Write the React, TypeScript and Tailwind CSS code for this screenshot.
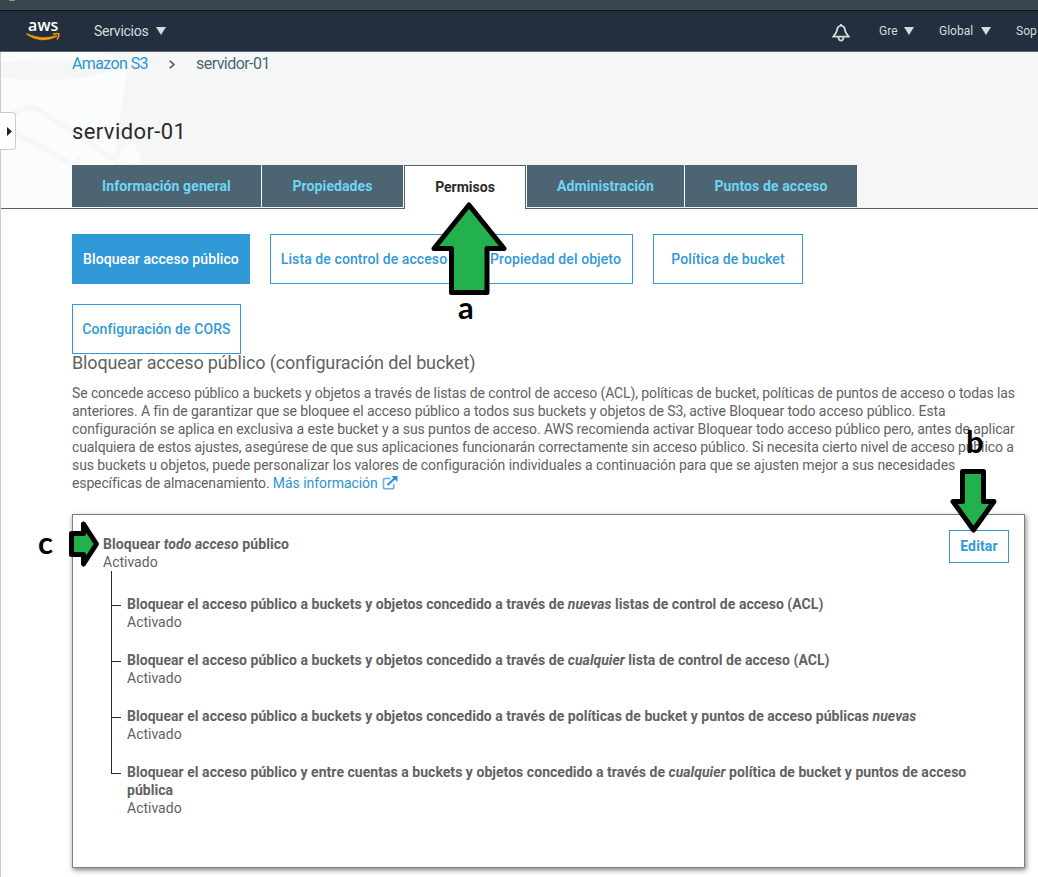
import type { ReactNode } from "react";

const Caret = ({ className }: { className: string }) => (
  <svg viewBox="0 0 10 8" className={`h-2 w-2.5 shrink-0 ${className}`}>
    <path d="M0 0H10L5 8Z" fill="#d5dbdb" />
  </svg>
);

const AwsLogo = () => (
  <div className="relative ml-[26px] h-[22px] w-[35px] shrink-0">
    <span className="absolute left-[2px] top-[-3px] font-['Open_Sans'] text-[16px] leading-[16px] font-semibold tracking-[0.1px] text-white">
      aws
    </span>
    <svg viewBox="0 0 35 22" className="absolute inset-0 h-[22px] w-[35px]">
      <path d="M.8 13.500Q15 20.500 30.500 15.500L31 16.500Q15 24.500 .5 14.300Z" fill="#f90" stroke="#f90" strokeWidth=".5" />
      <path d="M27 14.300Q33 12.600 33 14.500Q33 17 31 19.500" fill="none" stroke="#f90" strokeWidth="1.5" />
    </svg>
  </div>
);

const Bell = () => (
  <svg viewBox="0 0 18 18" className="h-[18px] w-[18px] shrink-0" fill="none" stroke="#d5dbdb" strokeWidth="1.8">
    <path d="M9 1.600C5.200 1.800 5.200 5 4.800 7C4.300 9.300 2.500 10.600 1.300 12.600H16.700C15.500 10.600 13.700 9.300 13.200 7C12.800 5 12.800 1.800 9 1.600Z" />
    <path d="M9 0V2M6.600 13V14Q6.800 16.600 9 16.600Q11.200 16.600 11.400 14V13" />
  </svg>
);

const ExternalIcon = () => (
  <svg viewBox="0 0 16 14" className="ml-1 inline-block h-3.5 w-4 align-[-2px]" fill="none">
    <path d="M8.500 2.500H2.800Q1.500 2.500 1.500 3.800V11Q1.500 12.800 3 12.800H10Q11.800 12.800 11.800 11V8" stroke="#64b2e3" strokeWidth="1.6" />
    <path d="M5.500 9L12.500 2.500" stroke="#2b94d3" strokeWidth="2.2" />
    <path d="M9.300 0H15.500V6Z" fill="#2b94d3" />
  </svg>
);

const ActionButton = ({ children, className }: { children: ReactNode; className: string }) => (
  <button className={`h-[50px] shrink-0 whitespace-nowrap border border-[#3299d8] text-[14px] font-medium tracking-[0.09px] ${className}`}>
    {children}
  </button>
);

const Tab = ({ children, className }: { children: ReactNode; className: string }) => (
  <div className={`flex h-[42px] items-center justify-center bg-[#4d6472] text-[14px] font-bold tracking-[0.1px] text-[#6fd5f3] ${className}`}>
    {children}
  </div>
);

const TreeItem = ({ children, last = false }: { children: ReactNode; last?: boolean }) => (
  <li className="flex">
    <div className="relative w-4 shrink-0">
      <div className={`absolute left-0 top-0 w-px bg-[#2b2b2b] ${last ? "h-[10px]" : "h-full"}`} />
      <div className="absolute left-0 top-[10px] h-px w-[10px] bg-[#2b2b2b]" />
    </div>
    <div className={last ? "" : "pb-5"}>
      <p className="font-bold tracking-[0.035px]">{children}</p>
      <p>Activado</p>
    </div>
  </li>
);

export default function App() {
  return (
    <div className="relative h-[877px] w-[1038px] overflow-hidden bg-white font-['Roboto',sans-serif] text-[14px] leading-[18px] text-[#626262]">
      <div className="h-[11px] overflow-hidden border-b border-[#10151b] bg-[#3a4650]">
        <div className="ml-[9px] h-px w-[6px] rounded-b bg-[#b78a73]" />
      </div>
      <nav className="flex h-[41px] items-center border-b border-[#596270] bg-[#232f3e] text-[12px] text-[#d5dbdb]">
        <AwsLogo />
        <span className="ml-[33px] w-[56px] whitespace-nowrap text-[14px] tracking-[-0.25px]">Servicios</span>
        <Caret className="ml-1.5" />
        <div className="ml-[666px] mt-1 flex"><Bell /></div>
        <span className="ml-[29px] w-[19px] whitespace-nowrap">Gre</span>
        <Caret className="ml-1.5" />
        <span className="ml-[25px] w-[36px] whitespace-nowrap">Global</span>
        <Caret className="ml-1.5" />
        <span className="ml-[25px] whitespace-nowrap">Sop</span>
      </nav>

      <main className="h-[825px] border-l border-[#ccc]">
        <header className="relative h-[157px] border-b border-[#4d6472] bg-[#f5f7f7] pl-[71px]">
          <svg viewBox="0 0 145 156" className="absolute left-0 top-0 h-[156px] w-[145px]">
            <path d="M0 0H100Q126 6 126 18L113 112L105 156H0Z" fill="#fbfcfc" />
            <path d="M0 11Q50 4 95 11Q115 18 95 23Q55 32 0 26Z" fill="#f5f7f7" />
            <path d="M8 66Q24 50 38 58L111 106L124 92" fill="none" stroke="#f6f8f8" strokeWidth="6" />
            <path d="M10 78L72 113L80 106" fill="none" stroke="#f6f8f8" strokeWidth="6" />
            <path d="M115 110L126 90Q137 90 140 112Z" fill="#fbfcfc" />
          </svg>
          <div className="relative flex h-[24px] items-center text-[16px]">
            <span className="w-[97px] whitespace-nowrap tracking-[-0.6px] text-[#2b94d3]">Amazon S3</span>
            <svg viewBox="0 0 6 9" className="h-[9px] w-[6px]" fill="none" stroke="#444" strokeWidth="1.5">
              <path d="M.7 .7L5 4.5L.7 8.3" />
            </svg>
            <span className="ml-[21px] tracking-[-0.55px] text-[#4d6472]">servidor-01</span>
          </div>
          <h1 className="relative mt-[44px] h-[24px] text-[22px] leading-[24px] tracking-[0.4px] text-[#2b2b2b]">servidor-01</h1>
          <div className="relative mt-[21px] flex gap-px">
            <Tab className="w-[189px]">Información general</Tab>
            <Tab className="w-[141px]">Propiedades</Tab>
            <div className="flex h-[44px] w-[122px] items-center justify-center border border-b-0 border-[#4d6472] bg-white pb-0.5 font-bold text-[#2b2b2b]">Permisos</div>
            <Tab className="w-[157px]">Administración</Tab>
            <Tab className="w-[172px]">Puntos de acceso</Tab>
          </div>
        </header>

        <section className="pl-[71px] pt-[25px]">
          <div className="flex gap-5">
            <ActionButton className="w-[178px] bg-[#3299d8] text-white">Bloquear acceso público</ActionButton>
            <ActionButton className="w-[188px] text-[#3299d8]">Lista de control de acceso</ActionButton>
            <ActionButton className="w-[155px] text-[#3299d8]">Propiedad del objeto</ActionButton>
            <ActionButton className="w-[150px] text-[#3299d8]">Política de bucket</ActionButton>
          </div>
          <ActionButton className="mt-5 block w-[169px] text-[#3299d8]">Configuración de CORS</ActionButton>

          <h2 className="h-[18px] text-[18px] leading-[18px] tracking-[-0.14px]">Bloquear acceso público (configuración del bucket)</h2>
          <p className="mt-[12px] whitespace-nowrap">
            <span className="tracking-[-0.11px]">Se concede acceso público a buckets y objetos a través de listas de control de acceso (ACL), políticas de bucket, políticas de puntos de acceso o todas las</span><br />
            <span className="tracking-[-0.084px]">anteriores. A fin de garantizar que se bloquee el acceso público a todos sus buckets y objetos de S3, active Bloquear todo acceso público. Esta</span><br />
            <span className="tracking-[-0.08px]">configuración se aplica en exclusiva a este bucket y a sus puntos de acceso. AWS recomienda activar Bloquear todo acceso público pero, antes de aplicar</span><br />
            <span className="tracking-[-0.11px]">cualquiera de estos ajustes, asegúrese de que sus aplicaciones funcionarán correctamente sin acceso público. Si necesita cierto nivel de acceso público a</span><br />
            <span className="tracking-[-0.076px]">sus buckets u objetos, puede personalizar los valores de configuración individuales a continuación para que se ajusten mejor a sus necesidades</span><br />
            <span className="tracking-[-0.13px]">específicas de almacenamiento. </span><a className="tracking-[-0.05px] text-[#2b94d3]">Más información<ExternalIcon /></a>
          </p>

          <div className="mt-[22px] flex h-[354px] w-[953px] items-start border border-[#808080] pl-[30px] pr-[15px] pt-[15px] shadow-[1px_2px_5px_rgba(0,0,0,0.5)]">
            <div className="mt-[5px] min-w-0 flex-1">
              <p className="font-bold tracking-[0.08px]">Bloquear <i>todo acceso</i> público</p>
              <p>Activado</p>
              <ul className="ml-2 whitespace-nowrap">
                <li className="h-6 border-l border-[#2b2b2b]" />
                <TreeItem>Bloquear el acceso público a buckets y objetos concedido a través de <i>nuevas</i> listas de control de acceso (ACL)</TreeItem>
                <TreeItem>Bloquear el acceso público a buckets y objetos concedido a través de <i>cualquier</i> lista de control de acceso (ACL)</TreeItem>
                <TreeItem>Bloquear el acceso público a buckets y objetos concedido a través de políticas de bucket y puntos de acceso públicas <i>nuevas</i></TreeItem>
                <TreeItem last>Bloquear el acceso público y entre cuentas a buckets y objetos concedido a través de <i>cualquier</i> política de bucket y puntos de acceso<br />pública</TreeItem>
              </ul>
            </div>
            <button className="h-[33px] w-[60px] shrink-0 border border-[#3299d8] pb-0.5 text-[14px] font-bold tracking-[0.15px] text-[#3299d8]">Editar</button>
          </div>
        </section>
      </main>

      <button className="absolute left-0 top-[112px] flex h-[38px] w-4 items-center justify-end rounded-r border border-l-0 border-[#ccc] bg-white pr-[3px]">
        <svg viewBox="0 0 5 9" className="h-[9px] w-[5px]"><path d="M0 0L5 4.5L0 9Z" fill="#222" /></svg>
      </button>

      <svg viewBox="0 0 78 94" className="absolute left-[430px] top-[202px] h-[94px] w-[78px]">
        <path d="M39 3L74 46.500H57V90.500H21.500V46.500H4Z" fill="#22b14c" stroke="#000" strokeWidth="5" strokeLinejoin="round" />
      </svg>
      <span className="absolute left-[458px] top-[293px] font-['Lato'] text-[31px] leading-[28px] font-bold text-black">a</span>
      <svg viewBox="0 0 48 66" className="absolute left-[949px] top-[468px] h-[66px] w-[48px]">
        <path d="M13.500 3.500H34.500V33.500H45L24.500 62L4 33.500H13.500Z" fill="#22b14c" stroke="#000" strokeWidth="5" strokeLinejoin="round" />
      </svg>
      <span className="absolute left-[966px] top-[427px] font-['Lato'] text-[31px] leading-[28px] font-bold text-black">b</span>
      <svg viewBox="0 0 32 48" className="absolute left-[68px] top-[520px] h-[48px] w-[32px]">
        <path d="M3.500 13.500H15.500V4L28.500 24L15.500 44V34.500H3.500Z" fill="#22b14c" stroke="#000" strokeWidth="5" strokeLinejoin="round" />
      </svg>
      <span className="absolute left-[38px] top-[528px] font-['Lato'] text-[31px] leading-[28px] font-bold text-black">c</span>
    </div>
  );
}
